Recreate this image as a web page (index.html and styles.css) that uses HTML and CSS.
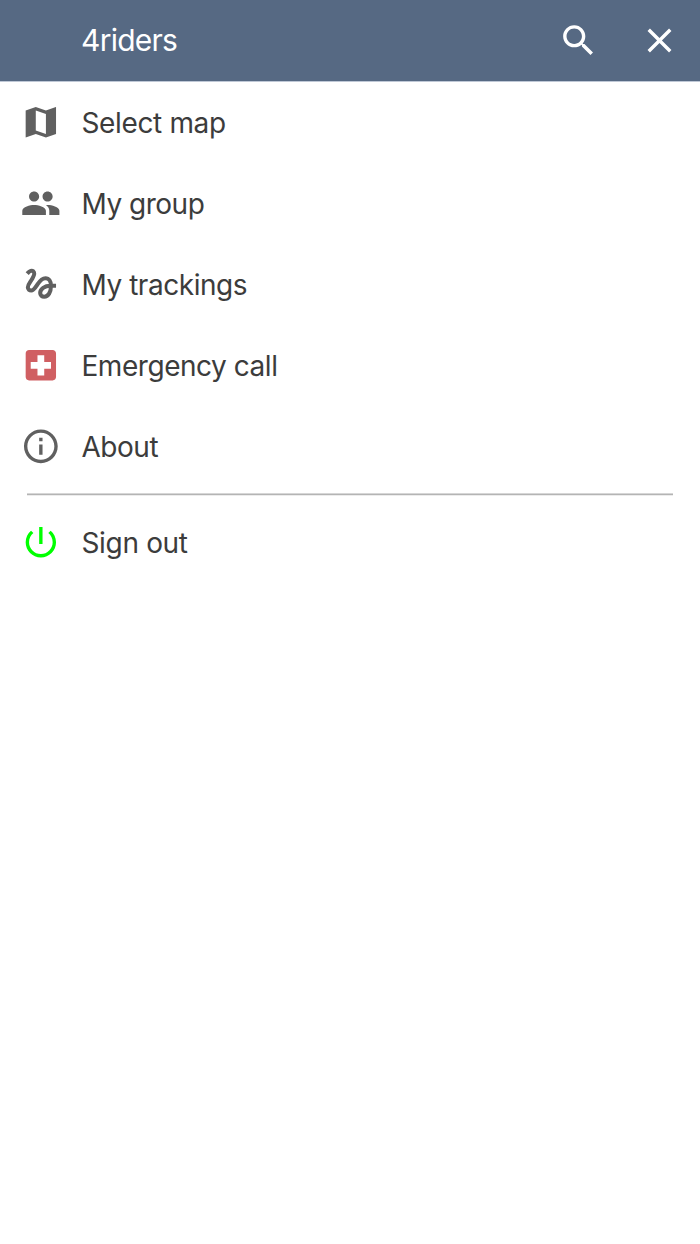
FILE: index.html
```html
<!DOCTYPE html>
<html lang="en">
<head>
<meta charset="utf-8">
<title>4riders</title>
<link rel="stylesheet" href="styles.css">
</head>
<body>
<header class="bar">
  <h1 class="title">4riders</h1>
  <button class="action search" aria-label="Search"><svg class="icon" viewBox="0 0 24 24"><path d="M15.5 14h-.79l-.28-.27C15.41 12.59 16 11.11 16 9.5 16 5.91 13.09 3 9.5 3S3 5.91 3 9.5 5.91 16 9.5 16c1.61 0 3.09-.59 4.23-1.57l.27.28v.79l5 4.99L20.49 19l-4.99-5zm-6 0C7.01 14 5 11.99 5 9.5S7.01 5 9.5 5 14 7.01 14 9.5 11.99 14 9.5 14z"/></svg></button>
  <button class="action" aria-label="Close"><svg class="icon" viewBox="0 0 24 24"><path d="M19 6.41L17.59 5 12 10.59 6.41 5 5 6.41 10.59 12 5 17.59 6.41 19 12 13.41 17.59 19 19 17.59 13.41 12z"/></svg></button>
</header>
<nav class="menu">
  <a class="item"><span class="slot"><svg class="icon" viewBox="0 0 24 24"><path d="M20.9 3L15 5.1 9 3 3 5.1V21l6-2.1 6 2.1 6-2.1V3zM15 19l-6-2.11V5l6 2.11V19z"/></svg></span><span class="label map">Select map</span></a>
  <a class="item"><span class="slot"><svg class="icon" viewBox="0 0 24 24"><path d="M16 11c1.66 0 2.99-1.34 2.99-3S17.66 5 16 5c-1.66 0-3 1.34-3 3s1.34 3 3 3zm-8 0c1.66 0 2.99-1.34 2.99-3S9.66 5 8 5C6.34 5 5 6.34 5 8s1.34 3 3 3zm0 2c-2.33 0-7 1.17-7 3.5V19h14v-2.5c0-2.33-4.67-3.5-7-3.5zm8 0c-.29 0-.62.02-.97.05 1.16.84 1.97 1.97 1.97 3.45V19h6v-2.5c0-2.33-4.67-3.5-7-3.5z"/></svg></span><span class="label group">My group</span></a>
  <a class="item"><span class="slot"><svg class="icon" viewBox="0 0 24 24"><path class="track" d="M3.9 5.7C5.2 4.2 6.6 3.6 7.6 4.4 8.6 5.3 8 6.8 7 8.6 5.6 11 4.3 12 4.3 13.8c0 1.2.9 1.9 2 1.9 1.5 0 2.5-1.8 3.7-3.6 1.3-2 2.7-3.7 4.7-3.7 2.2 0 3.3 2 3.3 4.3 0 4-1.6 6.7-4 6.7-1.4 0-2.4-.9-2.4-2.2 0-2.4 2.7-4.3 6-4.3H21"/></svg></span><span class="label trackings">My trackings</span></a>
  <a class="item"><span class="slot"><svg class="icon emergency" viewBox="0 0 24 24"><path d="M19 3H5c-1.1 0-1.99.9-1.99 2L3 19c0 1.1.9 2 2 2h14c1.1 0 2-.9 2-2V5c0-1.1-.9-2-2-2zm-1 11h-4v4h-4v-4H6v-4h4V6h4v4h4v4z"/></svg></span><span class="label call">Emergency call</span></a>
  <a class="item"><span class="slot"><svg class="icon" viewBox="0 0 24 24"><path d="M11 17h2v-6h-2v6zm1-15C6.48 2 2 6.48 2 12s4.48 10 10 10 10-4.48 10-10S17.52 2 12 2zm0 18c-4.41 0-8-3.59-8-8s3.59-8 8-8 8 3.59 8 8-3.59 8-8 8zM11 9h2V7h-2v2z"/></svg></span><span class="label about">About</span></a>
  <hr class="divider">
  <a class="item"><span class="slot"><svg class="icon power" viewBox="0 0 24 24"><path d="M13 3h-2v10h2V3zm4.83 2.17l-1.42 1.42C17.99 7.86 19 9.81 19 12c0 3.87-3.13 7-7 7s-7-3.13-7-7c0-2.19 1.01-4.14 2.58-5.42L6.17 5.17C4.23 6.82 3 9.26 3 12c0 4.97 4.03 9 9 9s9-4.03 9-9c0-2.74-1.23-5.18-3.17-6.83z"/></svg></span><span class="label out">Sign out</span></a>
</nav>
</body>
</html>
```
FILE: styles.css
```css
* { box-sizing: border-box; }
body {
  margin: 0;
  min-height: 100vh;
  background: #fff;
  color: #3c3c3c;
  font-family: Inter, "Liberation Sans", sans-serif;
  font-size: 28px;
}
.bar {
  display: flex;
  align-items: center;
  height: 82px;
  padding-left: 82px;
  border-bottom: 1px solid #bfc8d6;
  background: #566983;
  color: #fff;
}
.title {
  flex: 1;
  margin: 0 0 0 -1px;
  font-size: 30px;
  font-weight: 380;
  line-height: 81px;
  letter-spacing: -0.75px;
}
.action {
  display: grid;
  place-items: center;
  width: 82px;
  height: 81px;
  padding: 0;
  border: 0;
  background: none;
  color: inherit;
}
.search { padding-left: 2px; }
.icon {
  display: block;
  width: 41px;
  height: 41px;
  fill: currentColor;
}
.item {
  display: flex;
  align-items: center;
  height: 81px;
}
.slot {
  display: grid;
  place-items: center;
  width: 82px;
  padding-bottom: 1px;
  color: #606060;
}
.slot .icon {
  width: 40.5px;
  height: 40.5px;
  transform: translateX(-0.4px);
}
.track {
  fill: none;
  stroke: currentColor;
  stroke-width: 2.4;
}
.label {
  margin-left: -0.5px;
  font-weight: 380;
  line-height: 40px;
  letter-spacing: -0.46px;
}
.map { letter-spacing: -0.36px; }
.group { letter-spacing: -0.5px; }
.out { letter-spacing: -0.34px; }
.emergency { color: #d05f62; }
.power { color: #0f0; }
.divider {
  height: 3px;
  margin: 6px 27px;
  border: 0;
  background: linear-gradient(#d6d6d6 1px, #b4b4b4 1px 2px, #ececec 2px);
}
```
